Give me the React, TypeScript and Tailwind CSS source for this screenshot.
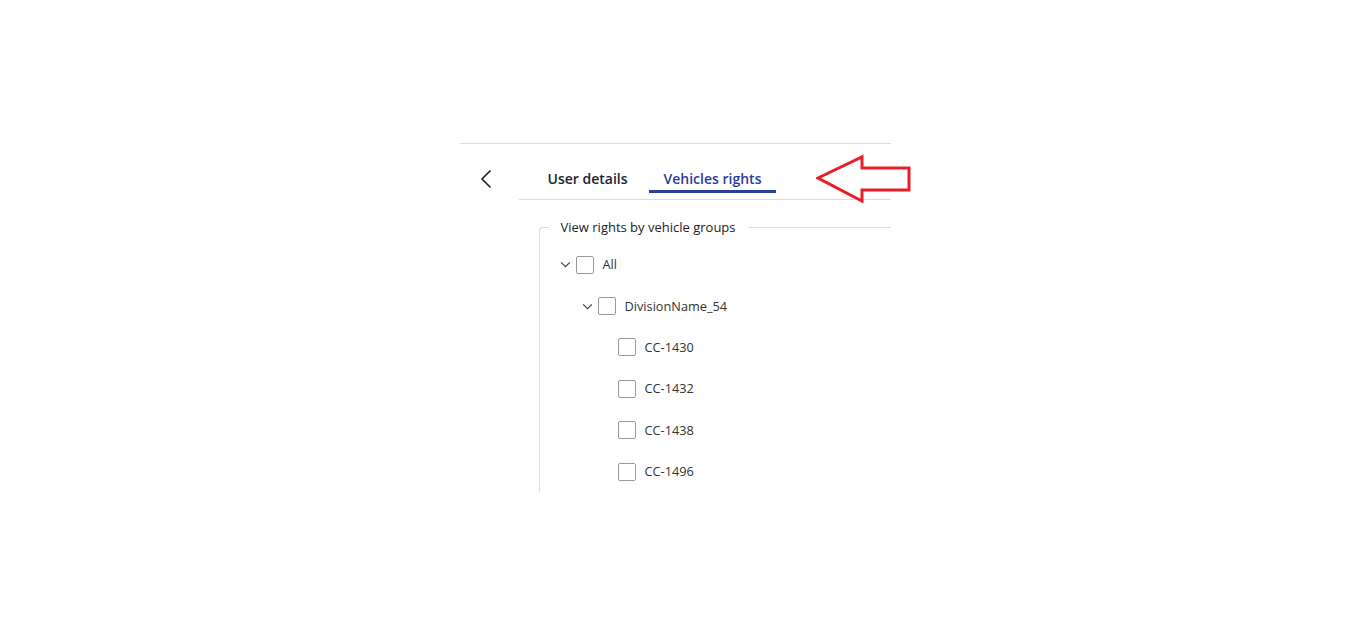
import React from 'react';

const Chevron: React.FC<{ className?: string }> = ({ className }) => (
    <svg viewBox="0 0 12 8" className={className} fill="none" stroke="currentColor" strokeWidth={1.4}>
        <path d="M1 1.5 L6 6.5 L11 1.5" />
    </svg>
);

const Box = () => <span className="block w-[18px] h-[18px] border border-[#9a9a9a] rounded-[2px] bg-white" />;

const rows = [
    { label: 'All', level: 0, expandable: true },
    { label: 'DivisionName_54', level: 1, expandable: true },
    { label: 'CC-1430', level: 2, expandable: false },
    { label: 'CC-1432', level: 2, expandable: false },
    { label: 'CC-1438', level: 2, expandable: false },
    { label: 'CC-1496', level: 2, expandable: false },
];

const indent = ['pl-[20px]', 'pl-[42px]', 'pl-[78px]'];

export default function App() {
    return (
        <div className="min-h-[629px] bg-white pt-[143px]" style={{ fontFamily: '"Open Sans", "Liberation Sans", sans-serif' }}>
            <div className="w-[431px] mx-auto border-t border-[#dcdcdc]">
                <div className="flex items-stretch h-[56px]">
                    <div className="w-[59px] flex items-center pl-[20px] pt-[14px]">
                        <svg viewBox="0 0 12 20" className="w-[12px] h-[20px] text-[#222]" fill="none" stroke="currentColor" strokeWidth={1.6}>
                            <path d="M10.5 1.5 L2 10 L10.5 18.5" />
                        </svg>
                    </div>
                    <div className="flex-1 border-b border-[#dcdcdc] relative">
                        <div className="flex pl-[15px] gap-[7px] h-full items-end pb-[6px]">
                            <div className="px-[14px] pb-[1px] text-[14px] leading-[20px] font-semibold text-[#1c2230] border-b-[3px] border-transparent">User details</div>
                            <div className="px-[15px] pb-[1px] text-[14px] leading-[20px] font-semibold text-[#2a3d97] border-b-[3px] border-[#2a3d97]">Vehicles rights</div>
                        </div>
                        <svg className="absolute left-[297px] top-[10px]" width="96" height="50" viewBox="0 0 96 50">
                            <path d="M2 24 L46 3 L46 14 L93 14 L93 36 L46 36 L46 47 Z" fill="none" stroke="#e6202a" strokeWidth={3} strokeLinejoin="miter" />
                        </svg>
                    </div>
                </div>
                <div className="pl-[79px] pt-[19px] overflow-hidden">
                    <fieldset className="border-l border-t border-[#dcdcdc] rounded-tl-[4px]">
                        <legend className="ml-[9px] px-[12px] text-[13px] text-[#222] leading-[16px]">View rights by vehicle groups</legend>
                        <div className="flex flex-col pt-[9px]">
                            {rows.map(r => (
                                <div key={r.label} className={`flex items-center h-[41.4px] ${indent[r.level]}`}>
                                    {r.expandable ? <Chevron className="w-[11px] h-[7px] text-[#444] mr-[5px]" /> : null}
                                    <Box />
                                    <span className="ml-[9px] text-[12.75px] text-[#333]">{r.label}</span>
                                </div>
                            ))}
                        </div>
                    </fieldset>
                </div>
            </div>
        </div>
    );
}
